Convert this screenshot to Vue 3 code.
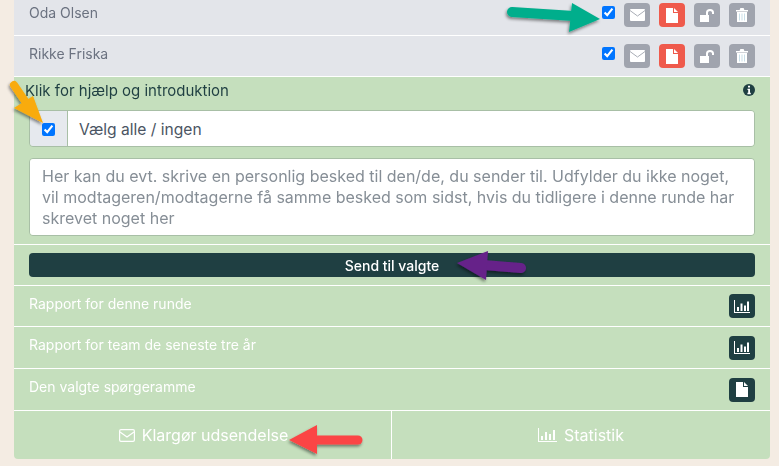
<script setup>
const people = ['Oda Olsen', 'Rikke Friska']
const reports = [
  { label: 'Rapport for denne runde', icon: 'chart' },
  { label: 'Rapport for team de seneste tre år', icon: 'chart' },
  { label: 'Den valgte spørgeramme', icon: 'file' }
]
const placeholder = 'Her kan du evt. skrive en personlig besked til den/de, du sender til. Udfylder du ikke noget, vil modtageren/modtagerne få samme besked som sidst, hvis du tidligere i denne runde har skrevet noget her'
</script>

<template>
  <div class="page">
    <div class="card">
      <div v-for="name in people" :key="name" class="person">
        <span class="name">{{ name }}</span>
        <div class="actions">
          <input type="checkbox" class="check" checked>
          <button class="btn grey">
            <svg width="15" height="12" viewBox="0 0 15 12"><rect width="15" height="12" rx="1" fill="#fff"/><path d="M0 1.5 7.5 7 15 1.5" fill="none" stroke="#a9adb6" stroke-width="1"/></svg>
          </button>
          <button class="btn red">
            <svg width="12" height="15" viewBox="0 0 12 15"><path d="M0 0H7V5H12V15H0ZM8 0 12 4H8Z" fill="#fff"/></svg>
          </button>
          <button class="btn grey">
            <svg width="15" height="13" viewBox="0 0 15 13"><path d="M0 6H9V13H0Z" fill="#fff"/><path d="M7 6V3.6C7 2 8.3 1 10 1S13 2 13 3.6V5" fill="none" stroke="#fff" stroke-width="2"/></svg>
          </button>
          <button class="btn grey">
            <svg width="12" height="14" viewBox="0 0 12 14"><path d="M0 2H3.6L4.4 0H7.6L8.4 2H12V3.4H0ZM1 4H11V14H1Z" fill="#fff"/><path d="M3.5 5.5V12.5M6 5.5V12.5M8.5 5.5V12.5" stroke="#c9dfe8" stroke-width="1"/></svg>
          </button>
        </div>
      </div>

      <div class="green">
        <div class="help">
          <span>Klik for hjælp og introduktion</span>
          <svg width="12" height="12" viewBox="0 0 12 12"><circle cx="6" cy="6" r="6" fill="#1f3f42"/><path d="M5 1.8H7V3.6H5ZM4.5 4.8H7V8.8H7.8V10.2H4.4V8.8H5.2V6.1H4.5Z" fill="#fff"/></svg>
        </div>
        <div class="compose">
          <div class="select-all">
            <label class="addon"><input type="checkbox" class="check" checked></label>
            <div class="select-label">Vælg alle / ingen</div>
          </div>
          <textarea class="message" :placeholder="placeholder"></textarea>
        </div>
        <div class="send-row">
          <button class="send">Send til valgte</button>
        </div>
        <div v-for="r in reports" :key="r.label" class="report">
          <span class="report-label">{{ r.label }}</span>
          <button class="btn dark">
            <svg v-if="r.icon === 'chart'" width="16" height="13" viewBox="0 0 16 13"><path d="M0 0H1V12H16V13H0Z" fill="#fff"/><path d="M3 7H5V11H3ZM6.5 3.5H8.5V11H6.5ZM10 5.5H12V11H10ZM13 1.5H15V11H13Z" fill="#fff"/></svg>
            <svg v-else width="12" height="15" viewBox="0 0 12 15"><path d="M0 0H7V5H12V15H0ZM8 0 12 4H8Z" fill="#fff"/></svg>
          </button>
        </div>
        <div class="tabs">
          <div class="tab first">
            <svg width="16" height="13" viewBox="0 0 16 13"><rect x=".6" y=".6" width="14.8" height="11.8" rx="1.4" fill="none" stroke="#fff" stroke-width="1.2"/><path d="M1 3 8 8 15 3" fill="none" stroke="#fff" stroke-width="1.2"/></svg>
            <span>Klargør udsendelse</span>
          </div>
          <div class="tab">
            <svg width="19" height="14" viewBox="0 0 19 14"><path d="M0 0H1V13H19V14H0Z" fill="#fff"/><path d="M3 8H5V12H3ZM7 4H9V12H7ZM11 6H13V12H11ZM15 2H17V12H15Z" fill="#fff"/></svg>
            <span>Statistik</span>
          </div>
        </div>
      </div>
    </div>

    <svg class="arrows" width="779" height="466" viewBox="0 0 779 466">
      <defs>
        <filter id="shade" x="-30%" y="-30%" width="160%" height="170%">
          <feDropShadow dx="-1" dy="2" stdDeviation="1.6" flood-color="#000" flood-opacity=".45"/>
        </filter>
      </defs>
      <g filter="url(#shade)">
        <path d="M512 12 574 16" stroke="#05ae8c" stroke-width="10" stroke-linecap="round" fill="none"/>
        <path d="M572 3 600 19 569 32Z" fill="#05ae8c"/>
        <path d="M14 85 27 104" stroke="#f9ab09" stroke-width="8" stroke-linecap="round" fill="none"/>
        <path d="M33 96 43 123 14 108Z" fill="#f9ab09"/>
        <path d="M521 268 484 265" stroke="#662189" stroke-width="10" stroke-linecap="round" fill="none"/>
        <path d="M488 251 486 280 457 263Z" fill="#662189"/>
        <path d="M358 440 315 440" stroke="#fb4444" stroke-width="9" stroke-linecap="round" fill="none"/>
        <path d="M317 425 317 454 289 440Z" fill="#fb4444"/>
      </g>
    </svg>
  </div>
</template>

<style scoped>
.page {
  position: relative;
  width: 779px;
  height: 466px;
  overflow: hidden;
  background: #f4ece3;
  padding: 0 9px 0 14px;
  box-sizing: border-box;
  font-family: Inter, "Liberation Sans", sans-serif;
}

.card {
  margin-top: -5px;
  border-radius: 0 0 4px 4px;
  overflow: hidden;
}

.person {
  display: flex;
  align-items: center;
  justify-content: space-between;
  height: 40px;
  padding: 0 15px;
  background: #e3e5ea;
  border-bottom: 1px solid #fff;
  font-size: 14px;
  color: #6b7280;
}

.name {
  padding-bottom: 6px;
}

.actions {
  display: flex;
  align-items: center;
  gap: 9px;
}

.check {
  width: 13px;
  height: 13px;
  margin: 0;
  accent-color: #0075ff;
}

.actions .check {
  align-self: flex-start;
  margin-top: 3px;
}

.btn {
  display: flex;
  align-items: center;
  justify-content: center;
  width: 26px;
  height: 24px;
  padding: 0;
  border: 0;
  border-radius: 4px;
}

.grey { background: #a0a4ae; }
.red { background: #ef5a4c; }
.dark { background: #1f3f42; }

.green {
  background: #c5dfbd;
  color: #fff;
}

.help {
  display: flex;
  align-items: center;
  justify-content: space-between;
  height: 20px;
  padding: 3px 15px 2px 11px;
  box-sizing: content-box;
  font-size: 15px;
  color: #1f3f42;
}

.compose {
  padding: 8px 15px;
  border-bottom: 1px solid #fff;
}

.select-all {
  display: flex;
  height: 37px;
  border: 1px solid #a8bfa6;
  border-radius: 4px;
  overflow: hidden;
  box-sizing: border-box;
}

.addon {
  display: flex;
  align-items: center;
  justify-content: center;
  width: 37px;
  padding-top: 2px;
  background: #e6e9ee;
  border-right: 1px solid #a8bfa6;
}

.select-label {
  flex: 1;
  display: flex;
  align-items: center;
  padding: 1px 0 0 11px;
  background: #fff;
  font-size: 15.6px;
  color: #4b5563;
}

.message {
  display: block;
  width: 100%;
  height: 78px;
  margin-top: 11px;
  padding: 7px 12px;
  box-sizing: border-box;
  border: 1px solid #a8bfa6;
  border-radius: 4px;
  background: #fff;
  font-family: inherit;
  font-size: 16px;
  line-height: 21px;
  resize: none;
  outline: none;
}

.message::placeholder {
  color: #868e96;
  opacity: 1;
}

.send-row {
  padding: 8px 15px;
  border-bottom: 1px solid #fff;
}

.send {
  display: block;
  width: 100%;
  height: 24px;
  padding: 0;
  border: 0;
  border-radius: 4px;
  background: #1f3f42;
  color: #fff;
  font-family: inherit;
  font-size: 14px;
  font-weight: 500;
}

.report {
  display: flex;
  align-items: center;
  justify-content: space-between;
  height: 40px;
  padding: 0 15px;
  border-bottom: 1px solid #fff;
  font-size: 14px;
}

.report + .report {
  height: 41px;
}

.report-label {
  padding-bottom: 6px;
}

.tabs {
  display: grid;
  grid-template-columns: 377px 1fr;
  height: 48px;
}

.tab {
  display: flex;
  align-items: center;
  justify-content: center;
  gap: 7px;
  font-size: 16px;
}

.tab.first {
  padding-left: 2px;
}

.tab + .tab {
  border-left: 1px solid #fff;
}

.arrows {
  position: absolute;
  left: 0;
  top: 0;
  pointer-events: none;
}
</style>
